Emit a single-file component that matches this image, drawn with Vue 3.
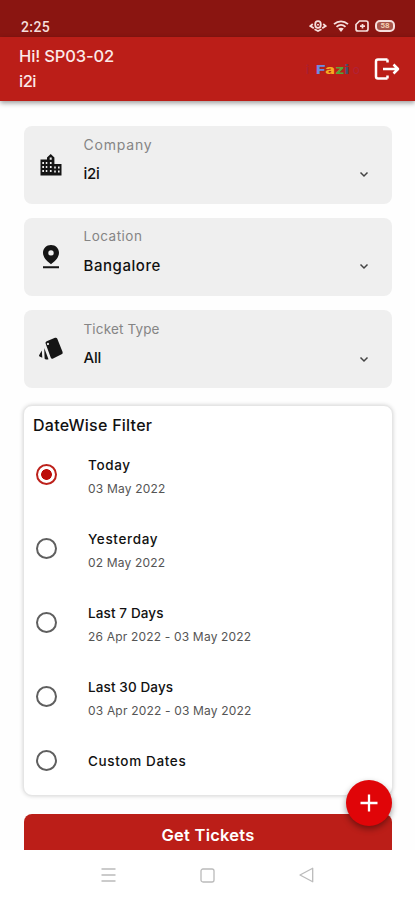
<script setup>
import { ref } from 'vue'

// ── State ─────────────────────────────────────────────────────────────────────
const selected = ref('today')

const fields = [
  { id: 'company',  label: 'Company',     value: 'i2i' },
  { id: 'location', label: 'Location',    value: 'Bangalore' },
  { id: 'type',     label: 'Ticket Type', value: 'All' },
]

const ranges = [
  { id: 'today',     title: 'Today',        dates: '03 May 2022' },
  { id: 'yesterday', title: 'Yesterday',    dates: '02 May 2022' },
  { id: 'week',      title: 'Last 7 Days',  dates: '26 Apr 2022 - 03 May 2022' },
  { id: 'month',     title: 'Last 30 Days', dates: '03 Apr 2022 - 03 May 2022' },
  { id: 'custom',    title: 'Custom Dates', dates: '' },
]
</script>

<template>
  <div class="app">

    <!-- Status bar -->
    <div class="status">
      <span class="status__time">2:25</span>
      <div class="status__icons">
        <svg width="18" height="12" viewBox="0 0 18 12" fill="none" stroke="currentColor" stroke-width="1.800">
          <path d="M3.800 4 1.300 6l3.500 2.300M14.200 4l2.500 2-3.500 2.300M5.500 9.300 9 11l3.500-1.700" />
          <path d="M9 1.200c2.200 0 2.800 1.500 2.800 3.200S11 7.800 9 7.800 6.200 6.100 6.200 4.400 6.800 1.200 9 1.200M9 4v1.600" />
        </svg>
        <svg width="16" height="13" viewBox="0 0 16 13" fill="none" stroke="currentColor" stroke-width="1.800">
          <path d="M1 4.200c4.200-3.900 9.800-3.900 14 0M3.500 6.900c2.700-2.400 6.300-2.400 9 0" />
          <path d="M5.200 8.600c1.700-1.300 3.900-1.300 5.600 0L8 12z" fill="currentColor" stroke="none" />
        </svg>
        <svg width="14" height="12" viewBox="0 0 14 12" fill="none" stroke="currentColor" stroke-width="1.700">
          <path d="M4.500 1H11q2 0 2 2v6q0 2-2 2H3q-2 0-2-2V4.500z" />
          <path d="M5 6.200h5M7.500 4v4.500" />
        </svg>
        <span class="battery">58</span>
      </div>
    </div>

    <!-- Header -->
    <header class="header">
      <div class="header__user">
        <div class="header__name">Hi! SP03-02</div>
        <div class="header__company">i2i</div>
      </div>
      <div class="logo">
        <span class="logo__edge">i</span>
        <span class="logo__name"><span class="logo__f">F</span><span class="logo__a">a</span><span class="logo__z">z</span><span class="logo__i">i</span></span>
        <span class="logo__edge logo__edge--end">o</span>
      </div>
      <button class="header__logout" aria-label="Log out">
        <svg width="26" height="24" viewBox="0 0 26 24" fill="none" stroke="currentColor" stroke-width="2.500" stroke-linejoin="round">
          <path d="M13.500 2.500H4q-2 0-2 2v15q0 2 2 2h9.500M13.500 2.500v3M13.500 21.500v-3M9 12h15M19.500 7.500 24 12l-4.500 4.500" />
        </svg>
      </button>
    </header>

    <main class="content">

      <!-- Dropdowns -->
      <div v-for="f in fields" :key="f.id" class="field">
        <div class="field__icon">
          <svg v-if="f.id === 'company'" width="22" height="22" viewBox="0 0 22 22">
            <path fill="#151515" d="M.5 5.500h6.500V3.500l3.700-3.500 3.700 3.500v6.500h7.100v11.500H.5z" />
            <path fill="#efefef" d="M2.300 8h1.700v1.900H2.300zM2.300 12h1.700v1.900H2.300zM2.300 16h1.700v1.900H2.300zM5.800 8h1.500v1.900H5.800zM5.800 12h1.500v1.900H5.800zM5.800 16h1.500v1.900H5.800zM9.700 3.500h2v2.300h-2zM9.900 8h1.700v1.900H9.900zM9.900 12h1.700v1.900H9.900zM9.900 16h1.700v1.900H9.900zM14.200 12.500h1.600v1.900h-1.600zM14.200 16.500h1.600v1.900h-1.600zM18 12.500h1.600v1.900H18zM18 16.500h1.600v1.900H18z" />
          </svg>
          <svg v-else-if="f.id === 'location'" width="18" height="24" viewBox="0 0 18 24">
            <path fill="#151515" fill-rule="evenodd" d="M9 0c4.700 0 8 3.500 8 7.800 0 4.900-4.800 9.200-8 11.400-3.200-2.200-8-6.500-8-11.400C1 3.500 4.300 0 9 0m0 5.200a2.700 2.700 0 1 0 0 5.400 2.700 2.700 0 0 0 0-5.400M1 21.300h16v1.900H1z" />
          </svg>
          <svg v-else width="26" height="24" viewBox="0 0 26 24">
            <path fill="#151515" fill-rule="evenodd" d="M8.700 4.200 17 .8q1.600-.6 2.300 1l5.300 13.200q.6 1.700-1 2.300l-8.500 4.200q-1.700.7-2.400-1L7.600 6.500q-.6-1.600 1.100-2.300m1.200 1.600a1.100 1.100 0 1 0 .1 0" />
            <path fill="#151515" d="M6.200 11 10.500 22.200q-3.300.8-3.900-.6z" />
            <path fill="#151515" d="m3.800 13.500.5 7.300-2.700-1.300q-.9-.4-.5-1.300z" />
          </svg>
        </div>
        <div class="field__body">
          <div class="field__label" :class="`field__label--${f.id}`">{{ f.label }}</div>
          <div class="field__value" :class="`field__value--${f.id}`">{{ f.value }}</div>
        </div>
        <svg class="field__arrow" width="10" height="7" viewBox="0 0 10 7" fill="none" stroke="#444" stroke-width="1.500">
          <path d="m1.500 1.500 3.500 3.500 3.500-3.500" />
        </svg>
      </div>

      <!-- Date filter -->
      <section class="filter">
        <h2 class="filter__title">DateWise Filter</h2>
        <label v-for="r in ranges" :key="r.id" class="range" :class="`range--${r.id}`">
          <input v-model="selected" class="range__input" type="radio" name="range" :value="r.id" />
          <span class="range__body">
            <span class="range__title">{{ r.title }}</span>
            <span v-if="r.dates" class="range__dates">{{ r.dates }}</span>
          </span>
        </label>
      </section>

      <button class="submit">Get Tickets</button>
    </main>

    <button class="fab" aria-label="Add ticket">
      <svg width="18" height="18" viewBox="0 0 18 18" stroke="#fff" stroke-width="2.300">
        <path d="M9 .5v17M.5 9h17" />
      </svg>
    </button>

    <!-- System navigation -->
    <nav class="nav">
      <svg width="15" height="14" viewBox="0 0 15 14" fill="none" stroke="currentColor" stroke-width="1.300">
        <path d="M.5 1h14M.5 7h14M.5 13h14" />
      </svg>
      <svg width="15" height="15" viewBox="0 0 15 15" fill="none" stroke="currentColor" stroke-width="1.300">
        <rect x="1" y="1" width="13" height="13" rx="2" />
      </svg>
      <svg width="15" height="16" viewBox="0 0 15 16" fill="none" stroke="currentColor" stroke-width="1.300" stroke-linejoin="round">
        <path d="M13.700 1.200v13.600L1 8z" />
      </svg>
    </nav>
  </div>
</template>

<style>
body { margin: 0; background: #fff; }
</style>

<style scoped>
.app {
  position: relative;
  display: flex;
  flex-direction: column;
  width: 415px;
  height: 900px;
  overflow: hidden;
  background: #fefefe;
  color: #111;
  font-family: Inter, "Open Sans", sans-serif;
}
.app * { box-sizing: border-box; }
button { border: none; padding: 0; font-family: inherit; cursor: pointer; }

/* Status bar */
.status {
  flex: none;
  display: flex;
  justify-content: space-between;
  height: 37px;
  padding: 16px 20px 0 21px;
  background: #8a1511;
  color: #f6dfdd;
}
.status__time  { font: 500 14px/22px Roboto, sans-serif; letter-spacing: .4px; }
.status__icons { display: flex; align-items: center; gap: 6px; height: 20px; }
.battery {
  width: 20px; height: 12px;
  border: 2px solid #f6dfdd; border-radius: 5px;
  background: #a8554b;
  color: #f3cfb4;
  font: 700 8px/8px Roboto, sans-serif;
  text-align: center;
}

/* Header */
.header {
  flex: none;
  display: flex;
  align-items: center;
  height: 64px;
  padding: 0 15px 0 19px;
  background: #bb1e18;
  color: #fbe9e8;
  box-shadow: 0 2px 5px rgba(0, 0, 0, .4);
}
.header__user    { flex: 1; font-size: 16.500px; line-height: 25px; font-weight: 500; }
.header__name    { letter-spacing: -.15px; }
.header__company { letter-spacing: -.5px; }
.header__logout  { display: flex; background: none; color: #fff; }

.logo         { display: flex; align-items: center; margin-right: 14px; padding-top: 2px; line-height: 16px; }
.logo__edge   { color: #a3203c; font-size: 12px; margin-right: 7px; }
.logo__edge--end { color: #b02238; margin: 0 0 0 3px; }
/* Stretched wordmark */
.logo__name   { width: 34px; font-size: 12px; font-weight: 800; white-space: nowrap; transform: scaleX(1.360); transform-origin: left; }
.logo__f      { color: #6b8ae0; }
.logo__a      { color: #f7ac22; }
.logo__z      { color: #55a53c; }
.logo__i      { color: #44506b; }

/* Dropdowns */
.content { flex: none; display: flex; flex-direction: column; height: 749px; padding: 24.500px 23px 0 24px; }

.field {
  flex: none;
  display: flex;
  height: 78px;
  margin-bottom: 14.300px;
  padding-right: 23px;
  border-radius: 8px;
  background: #efefef;
}
.field__icon  { width: 54px; display: flex; align-items: center; justify-content: center; }
.field__body  { flex: 1; padding: 8.500px 0 0 5.500px; }
.field__label { font-size: 13.500px; line-height: 21px; color: #858585; letter-spacing: .5px; }
.field__label--company { font-size: 14px; letter-spacing: .8px; }
.field__label--type    { letter-spacing: .15px; }
.field__value { font-size: 15px; line-height: 22px; margin-top: 7.500px; font-weight: 500; letter-spacing: .55px; }
.field__value--company { letter-spacing: -.3px; }
.field__value--type    { letter-spacing: -.2px; }
.field__arrow { margin-top: 45.500px; }

/* Date filter */
.filter {
  flex: none;
  height: 391px;
  margin: 3px -1px 0;
  padding: 7px 9px 0;
  border: 1px solid #e5e5e5;
  border-radius: 9px;
  background: #fff;
  box-shadow: 0 0 4px rgba(0, 0, 0, .18);
}
.filter__title { margin: 0; font-size: 16px; line-height: 24px; font-weight: 500; letter-spacing: .25px; }

.range         { display: flex; align-items: center; height: 74px; padding-left: 3px; cursor: pointer; }
.range--custom { height: 55px; }
.range__input {
  appearance: none;
  flex: none;
  width: 21px; height: 21px;
  margin: 0 31px 0 0;
  border: 2px solid #5f5f5f; border-radius: 50%;
}
.range__input:checked { border-color: #bd211b; background: radial-gradient(circle, #bd0d0a 5px, transparent 5.700px); }
.range__body   { display: flex; flex-direction: column; padding-top: 4px; }
.range__title  { font-size: 13.500px; line-height: 22px; font-weight: 500; letter-spacing: .12px; }
.range__dates  { margin-top: 3px; font-size: 12px; line-height: 20px; color: #555; letter-spacing: .18px; }
.range--today .range__title,
.range--yesterday .range__title,
.range--custom .range__title { letter-spacing: .65px; }
.range--custom .range__body  { padding-top: 0; }

/* Submit */
.submit {
  flex: none;
  height: 36px;
  margin-top: 17.500px;
  padding-top: 7px;
  border-radius: 8px 8px 0 0;
  background: #bb1e18;
  color: #fff;
  font-size: 16.500px; font-weight: 600; letter-spacing: .25px;
}

.fab {
  position: absolute;
  left: 346px; top: 780px;
  display: flex; align-items: center; justify-content: center;
  width: 46px; height: 46px;
  border-radius: 50%;
  background: #e00508;
  box-shadow: 0 3px 6px rgba(0, 0, 0, .4);
}

/* System navigation */
.nav {
  position: relative;
  flex: 1;
  display: flex;
  align-items: center;
  justify-content: space-between;
  padding: 0 101px;
  background: #fff;
  color: #bbb;
}
</style>
